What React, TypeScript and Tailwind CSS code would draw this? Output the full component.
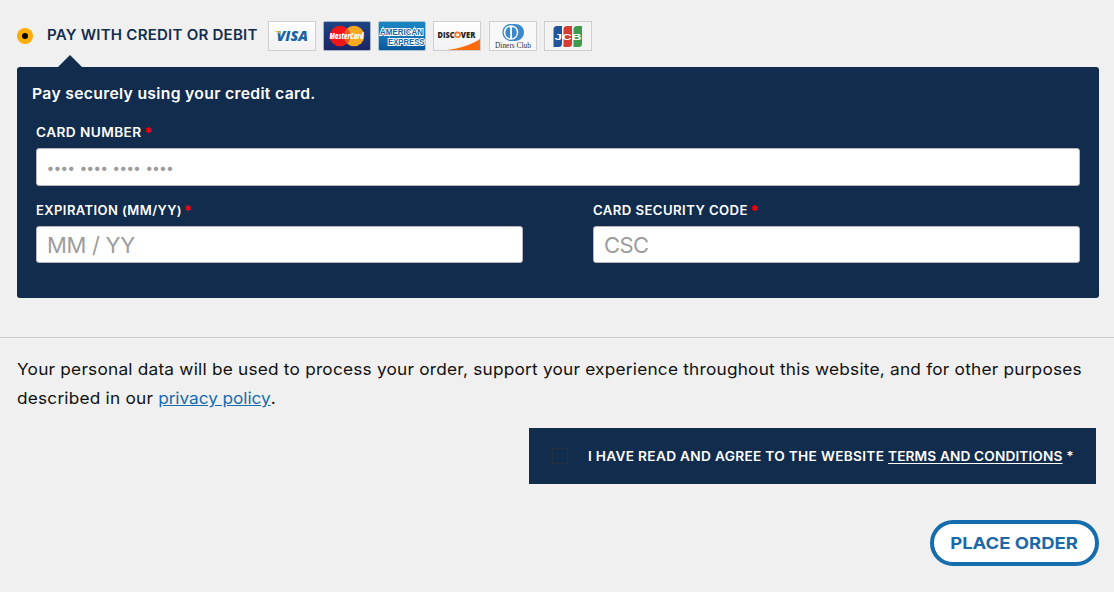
import React from 'react';

function CardIcons() {
  return (
    <div className="ml-[10px] flex gap-[7.15px]">
      <svg className="h-[30px] w-[48px]" viewBox="0 0 48 30" role="img" aria-label="Visa">
        <defs>
          <linearGradient id="paper" x1="0" y1="0" x2="0" y2="1">
            <stop offset="0" stopColor="#fff" />
            <stop offset="1" stopColor="#f1f1f4" />
          </linearGradient>
        </defs>
        <rect x=".5" y=".5" width="47" height="29" fill="url(#paper)" stroke="#cfcfcf" />
        <text x="8.500" y="20.200" fontFamily="Open Sans, sans-serif" fontSize="14" fontWeight="800" fontStyle="italic" fill="#1a62a6" textLength="31.500" lengthAdjust="spacingAndGlyphs">VISA</text>
        <path d="M7 10h4.600l1.400 4.200C11.500 12 9.500 11 7 10.400z" fill="#f0b323" />
      </svg>
      <svg className="h-[30px] w-[48px]" viewBox="0 0 48 30" role="img" aria-label="MasterCard">
        <defs>
          <linearGradient id="mc" x1="0" y1="0" x2="0" y2="1">
            <stop offset="0" stopColor="#1d4585" />
            <stop offset="1" stopColor="#1c2463" />
          </linearGradient>
        </defs>
        <rect x=".5" y=".5" width="47" height="29" rx="1.500" fill="url(#mc)" stroke="#a9b3c8" />
        <circle cx="31" cy="15" r="10.300" fill="#f6a821" />
        <circle cx="17" cy="15" r="10.300" fill="#f0141b" />
        <path d="M24 7.500a10.300 10.300 0 0 1 0 15a10.300 10.300 0 0 1 0-15" fill="#ef5b22" />
        <text x="6.500" y="18.200" fontFamily="Open Sans, sans-serif" fontSize="8.800" fontWeight="800" fontStyle="italic" fill="#fff" textLength="34" lengthAdjust="spacingAndGlyphs">MasterCard</text>
      </svg>
      <svg className="h-[30px] w-[48px]" viewBox="0 0 48 30" role="img" aria-label="American Express">
        <defs>
          <linearGradient id="amex" x1="0" y1="0" x2="0" y2="1">
            <stop offset="0" stopColor="#1a86c0" />
            <stop offset=".5" stopColor="#1478b8" />
            <stop offset="1" stopColor="#07559a" />
          </linearGradient>
        </defs>
        <rect x=".5" y=".5" width="47" height="29" rx="1.500" fill="url(#amex)" stroke="#a9c4d8" />
        <g fontFamily="Liberation Sans, sans-serif" fontSize="9" fontWeight="700" fill="#1769a5" stroke="#fff" strokeWidth="2" paintOrder="stroke">
          <text x="2" y="14.200" textLength="43" lengthAdjust="spacingAndGlyphs">AMERICAN</text>
          <text x="10" y="23.600" textLength="36.500" lengthAdjust="spacingAndGlyphs">EXPRESS</text>
        </g>
      </svg>
      <svg className="h-[30px] w-[48px]" viewBox="0 0 48 30" role="img" aria-label="Discover">
        <rect x=".5" y=".5" width="47" height="29" fill="url(#paper)" stroke="#cfcfcf" />
        <path d="M14 29C27 27.500 39 23.500 47 18v11z" fill="#ff6b0a" />
        <text x="4.500" y="16.800" fontFamily="Open Sans, sans-serif" fontSize="8.600" fontWeight="800" fill="#252525" textLength="17" lengthAdjust="spacingAndGlyphs">DISC</text>
        <circle cx="24.600" cy="13.800" r="2.400" fill="#fff" stroke="#f47920" strokeWidth="1.800" />
        <text x="27.800" y="16.800" fontFamily="Open Sans, sans-serif" fontSize="8.600" fontWeight="800" fill="#252525" textLength="14.500" lengthAdjust="spacingAndGlyphs">VER</text>
      </svg>
      <svg className="h-[30px] w-[48px]" viewBox="0 0 48 30" role="img" aria-label="Diners Club">
        <rect x=".5" y=".5" width="47" height="29" fill="#f8f8f9" stroke="#cfcfcf" />
        <path d="M22 3h4c5 0 9 3.500 9 8.300S31 20 26 20h-4c-5 0-8.600-4-8.600-8.700S17 3 22 3z" fill="#3d88cb" />
        <circle cx="22" cy="11.500" r="7.300" fill="#f8f8f9" />
        <path d="M20.500 6.500v10a5.300 5.300 0 0 1 0-10M23.600 6.500v10a5.300 5.300 0 0 0 0-10" fill="#3d88cb" stroke="#3d88cb" strokeWidth="1.200" />
        <text x="6" y="26.800" fontFamily="Liberation Serif, serif" fontSize="8" fill="#333" textLength="36" lengthAdjust="spacingAndGlyphs">Diners Club</text>
      </svg>
      <svg className="h-[30px] w-[48px]" viewBox="0 0 48 30" role="img" aria-label="JCB">
        <rect x=".5" y=".5" width="47" height="29" fill="#f4f4f5" stroke="#cfcfcf" />
        <path d="M13 5h5v17.500q0 3.500-3.500 3.500H9.500V8.500Q9.500 5 13 5z" fill="#23539b" />
        <path d="M23 5h5v17.500q0 3.500-3.500 3.500h-5V8.500Q19.500 5 23 5z" fill="#d43c34" />
        <path d="M33 5h5v17.500q0 3.500-3.500 3.500h-5V8.500Q29.500 5 33 5z" fill="#3f9a4e" />
        <text x="10.500" y="18.700" fontFamily="Liberation Sans, sans-serif" fontSize="9.500" fontWeight="700" fill="#fff" textLength="27" lengthAdjust="spacingAndGlyphs">JCB</text>
      </svg>
    </div>
  );
}

type FieldProps = {
  label: string;
  labelClass: string;
  placeholder: string;
  inputClass: string;
};

function Field({ label, labelClass, placeholder, inputClass }: FieldProps) {
  return (
    <label className="flex flex-col">
      <span className="flex h-[20px] items-center pt-[2px] text-[12.5px] font-semibold whitespace-nowrap text-white">
        <span className={`origin-left tracking-[0.4px] ${labelClass}`}>{label}</span>
        <span className="pb-[2px] text-[15px] leading-none font-bold text-[#ff0000]">*</span>
      </span>
      <input
        placeholder={placeholder}
        className={`mt-[6px] w-full rounded-[3px] border border-[#bbb3b9] bg-white px-[10px] text-black placeholder:text-[#9c9c9c] placeholder:opacity-100 ${inputClass}`}
      />
    </label>
  );
}

export default function App() {
  return (
    <main className="flex h-[592px] w-[1114px] flex-col overflow-hidden bg-[#f0f0f0] font-['Inter','Liberation_Sans',sans-serif]">
      <div className="mt-[21px] ml-[17px] flex h-[30px] items-center">
        <span className="flex size-4 items-center justify-center rounded-full bg-[#ffae00]">
          <span className="size-[6px] rounded-full bg-black" />
        </span>
        <span className="ml-[14px] flex w-[211px] pb-[2px] whitespace-nowrap">
          <span className="origin-left scale-x-[1.04] text-[14.5px] leading-[20px] font-semibold tracking-[0.2px] text-[#132d4e]">PAY WITH CREDIT OR DEBIT</span>
        </span>
        <CardIcons />
      </div>
      <svg className="mt-[4px] ml-[58px] h-[12px] w-[24px] shrink-0" viewBox="0 0 24 12"><path d="M0 12L12 0L24 12z" fill="#122c4d" /></svg>
      <section className="ml-[17px] h-[231px] w-[1082px] shrink-0 rounded-[3px] bg-[#122c4d] px-[19px] pt-[16px]">
        <p className="-ml-[4px] h-[20px] w-fit origin-left scale-x-[1.048] text-[15px] leading-[21px] font-semibold tracking-[0.3px] text-white">Pay securely using your credit card.</p>
        <div className="mt-[19px]">
          <Field label="CARD NUMBER" labelClass="scale-x-[1.09] mr-[11px]" placeholder="•••• •••• •••• ••••" inputClass="h-[38px] pl-[9.5px] text-[14px] tracking-[-0.95px] [word-spacing:2.2px]" />
        </div>
        <div className="mt-[14px] flex justify-between">
          <div className="w-[487px]">
            <Field label="EXPIRATION (MM/YY)" labelClass="scale-x-[1.04] mr-[7px]" placeholder="MM / YY" inputClass="h-[37px] text-[22px] tracking-[-0.3px]" />
          </div>
          <div className="w-[487px]">
            <Field label="CARD SECURITY CODE" labelClass="scale-x-[1.053] mr-[10px]" placeholder="CSC" inputClass="h-[37px] text-[22px] tracking-[-0.6px]" />
          </div>
        </div>
      </section>
      <hr className="mt-[39px] border-[#d0c9cc]" />
      <p className="mt-[17px] ml-[17px] text-[16.5px] leading-[29px] whitespace-nowrap text-[#111]">
        <span className="block w-fit origin-left scale-x-[1.046] tracking-[0.2px]">Your personal data will be used to process your order, support your experience throughout this website, and for other purposes</span>
        <span className="block w-fit origin-left scale-x-[1.045] tracking-[0.2px]">described in our <a href="#" className="-tracking-[0.05px] text-[#156dad] underline">privacy policy</a>.</span>
      </p>
      <label className="mt-[15px] ml-[529px] flex h-[56px] w-[567px] shrink-0 items-center bg-[#122c4d] pl-[23px] text-white">
        <span className="size-4 border border-[#23303f]" />
        <span className="ml-[20px] origin-left scale-x-[1.093] pt-[2px] text-[12.5px] font-semibold tracking-[0.2px] whitespace-nowrap"><span className="tracking-[0.28px]">I HAVE READ AND AGREE TO THE WEBSITE </span><a href="#" className="tracking-[0.12px] underline underline-offset-2">TERMS AND CONDITIONS</a> *</span>
      </label>
      <button className="mt-[36px] ml-[930px] h-[46px] w-[169px] shrink-0 rounded-full border-4 border-[#156dad] bg-white text-[16.5px] font-bold whitespace-nowrap text-[#1d68a9]">
        <span className="inline-block scale-x-[1.12]">PLACE ORDER</span>
      </button>
    </main>
  );
}
